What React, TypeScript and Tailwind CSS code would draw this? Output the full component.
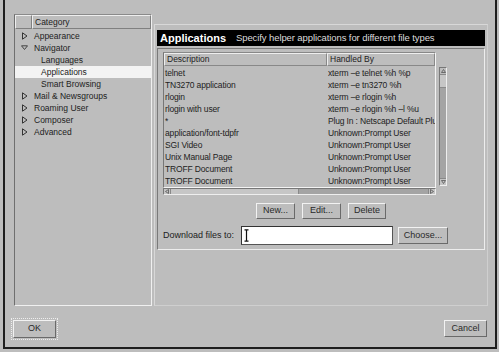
import React from "react";

const tree: { label: string; level: number; arrow?: "right" | "down"; selected?: boolean }[] = [
  { label: "Appearance", level: 0, arrow: "right" },
  { label: "Navigator", level: 0, arrow: "down" },
  { label: "Languages", level: 1 },
  { label: "Applications", level: 1, selected: true },
  { label: "Smart Browsing", level: 1 },
  { label: "Mail & Newsgroups", level: 0, arrow: "right" },
  { label: "Roaming User", level: 0, arrow: "right" },
  { label: "Composer", level: 0, arrow: "right" },
  { label: "Advanced", level: 0, arrow: "right" },
];

const apps: [string, string][] = [
  ["telnet", "xterm –e telnet %h %p"],
  ["TN3270 application", "xterm –e tn3270 %h"],
  ["rlogin", "xterm –e rlogin %h"],
  ["rlogin with user", "xterm –e rlogin %h –l %u"],
  ["*", "Plug In : Netscape Default Plu"],
  ["application/font-tdpfr", "Unknown:Prompt User"],
  ["SGI Video", "Unknown:Prompt User"],
  ["Unix Manual Page", "Unknown:Prompt User"],
  ["TROFF Document", "Unknown:Prompt User"],
  ["TROFF Document", "Unknown:Prompt User"],
];

function Arrow({ dir }: { dir: "right" | "down" }) {
  return dir === "right" ? (
    <svg width="6" height="8" viewBox="0 0 6 8" className="block">
      <path d="M0.5 0.8 L5 4 L0.5 7.2 Z" fill="none" stroke="#333" strokeWidth="1" />
    </svg>
  ) : (
    <svg width="7" height="6" viewBox="0 0 7 6" className="block">
      <path d="M0.5 0.8 L6.5 0.8 L3.5 4.5 Z" fill="none" stroke="#444" strokeWidth="1" />
    </svg>
  );
}

function Btn({ label, w, h = "h-[16px]" }: { label: string; w: string; h?: string }) {
  return (
    <div
      className={`${w} ${h} flex items-center justify-center border border-t-[#f2f2f2] border-l-[#f2f2f2] border-b-[#6a6a6a] border-r-[#6a6a6a] text-[9px] text-[#2a2a2a]`}
    >
      {label}
    </div>
  );
}

export default function App() {
  return (
    <div className="w-[499px] h-[352px] bg-[#bdbdbd] font-['Liberation_Sans',Arial,sans-serif] text-[#222] overflow-hidden">
      <div className="ml-[3px] w-[494px] h-[349px] border-l-2 border-r-2 border-b-2 border-[#1e1e1e] flex flex-col">
        {/* main row */}
        <div className="flex pl-[9px] pt-[14px]">
          {/* left tree panel */}
          <div className="w-[138px] h-[292px] border border-t-[#8a8a8a] border-l-[#6f6f6f] border-b-[#f0f0f0] border-r-[#f0f0f0] flex flex-col">
            <div className="flex h-[14px] shrink-0">
              <div className="w-[17px] h-full border border-t-[#eeeeee] border-l-[#eeeeee] border-b-[#808080] border-r-[#808080]" />
              <div className="flex-1 h-full border border-t-[#eeeeee] border-l-[#eeeeee] border-b-[#808080] border-r-[#808080] flex items-center pl-[2px] text-[8.5px]">
                Category
              </div>
            </div>
            <div className="flex flex-col pt-[1px]">
              {tree.map((t, i) => (
                <div
                  key={i}
                  className={`h-[12px] flex items-center text-[8.5px] ${t.selected ? "bg-[#f3f3f3]" : ""}`}
                >
                  <div className="w-[19px] flex justify-center">
                    {t.arrow ? <Arrow dir={t.arrow} /> : null}
                  </div>
                  <span className={t.level ? "pl-[7px]" : "pl-0"}>{t.label}</span>
                </div>
              ))}
            </div>
          </div>

          {/* right panel */}
          <div className="ml-[2px] mt-[10px] w-[334px] h-[282px] border border-t-[#d8d8d8] border-l-[#d8d8d8] border-b-[#cfcfcf] border-r-[#cfcfcf] flex flex-col px-[2px] pt-[5px]">
            <div className="h-[16px] bg-black flex items-center pl-[3px] whitespace-nowrap overflow-hidden">
              <span className="text-[11px] font-bold text-white">Applications</span>
              <span className="ml-[10px] text-[9.5px] tracking-[-0.1px] text-[#dcdcdc]">
                Specify helper applications for different file types
              </span>
            </div>
            <div className="mt-[2px] h-[202px] border border-t-[#7a7a7a] border-l-[#7a7a7a] border-b-[#ededed] border-r-[#ededed] flex flex-col pl-[5px] pt-[3px]">
              {/* table + scrollbars */}
              <div className="flex">
                <div className="w-[273px] h-[136px] border border-t-[#888] border-l-[#777] border-b-[#f4f4f4] border-r-[#f4f4f4] flex flex-col overflow-hidden">
                  <div className="flex h-[13px] shrink-0 text-[8.5px]">
                    <div className="w-[163px] border border-t-[#eee] border-l-[#eee] border-b-[#888] border-r-[#888] flex items-center pl-[2px]">
                      Description
                    </div>
                    <div className="flex-1 border border-t-[#eee] border-l-[#eee] border-b-[#888] border-r-[#888] flex items-center pl-[2px]">
                      Handled By
                    </div>
                  </div>
                  <div className="flex flex-col pt-[1px]">
                    {apps.map(([d, h], i) => (
                      <div key={i} className="flex h-[12px] shrink-0 items-center text-[8.5px] tracking-[-0.15px] whitespace-nowrap">
                        <div className="w-[163px] pl-[1px] overflow-hidden">{d}</div>
                        <div className="w-[108px] pl-[1px] overflow-hidden">{h}</div>
                      </div>
                    ))}
                  </div>
                </div>
                {/* vertical scrollbar */}
                <div className="ml-[3px] mt-[15px] w-[8px] h-[119px] border border-t-[#777] border-l-[#777] border-b-[#eee] border-r-[#eee] flex flex-col">
                  <div className="h-[7px] shrink-0 flex items-center justify-center border-b border-[#888]">
                    <svg width="5" height="4" viewBox="0 0 5 4">
                      <path d="M0.5 3.5 L2.5 0.5 L4.5 3.5 Z" fill="none" stroke="#555" strokeWidth="0.8" />
                    </svg>
                  </div>
                  <div className="h-[13px] shrink-0 bg-[#c6c6c6] border-b border-[#8a8a8a]" />
                  <div className="flex-1 bg-[#a4a4a4]" />
                  <div className="h-[7px] shrink-0 flex items-center justify-center bg-[#c4c4c4] border-t border-[#888]">
                    <svg width="5" height="4" viewBox="0 0 5 4">
                      <path d="M0.5 0.5 L2.5 3.5 L4.5 0.5 Z" fill="none" stroke="#555" strokeWidth="0.8" />
                    </svg>
                  </div>
                </div>
              </div>
              {/* horizontal scrollbar */}
              <div className="w-[273px] h-[7px] border border-t-[#777] border-l-[#777] border-b-[#eee] border-r-[#eee] flex">
                <div className="w-[7px] shrink-0 flex items-center justify-center border-r border-[#888] bg-[#c4c4c4]">
                  <svg width="4" height="5" viewBox="0 0 4 5">
                    <path d="M3.5 0.5 L0.5 2.5 L3.5 4.5 Z" fill="none" stroke="#555" strokeWidth="0.8" />
                  </svg>
                </div>
                <div className="w-[128px] shrink-0 bg-[#c6c6c6] border-r border-[#8a8a8a]" />
                <div className="flex-1 bg-[#a4a4a4]" />
                <div className="w-[7px] shrink-0 flex items-center justify-center bg-[#c4c4c4] border-l border-[#888]">
                  <svg width="4" height="5" viewBox="0 0 4 5">
                    <path d="M0.5 0.5 L3.5 2.5 L0.5 4.5 Z" fill="none" stroke="#555" strokeWidth="0.8" />
                  </svg>
                </div>
              </div>
              {/* buttons */}
              <div className="mt-[8px] flex justify-center gap-[7px] pr-[5px]">
                <Btn label="New..." w="w-[39px]" />
                <Btn label="Edit..." w="w-[39px]" />
                <Btn label="Delete" w="w-[38px]" />
              </div>
              {/* download row */}
              <div className="mt-[7px] flex items-center">
                <span className="text-[9px] w-[78px] whitespace-nowrap">Download files to:</span>
                <div className="w-[152px] h-[19px] bg-white border border-t-[#333] border-l-[#333] border-b-[#555] border-r-[#555] flex items-center pl-[2px]">
                  <svg width="5" height="13" viewBox="0 0 5 13">
                    <path d="M0.5 0.8 H4.5 M2.5 0.8 V12.2 M0.5 12.2 H4.5" fill="none" stroke="#111" strokeWidth="1.2" />
                  </svg>
                </div>
                <div className="ml-[5px]">
                  <Btn label="Choose..." w="w-[50px]" h="h-[17px]" />
                </div>
              </div>
            </div>
          </div>
        </div>

        {/* bottom row */}
        <div className="mt-[12px] flex items-start justify-between pl-[6px] pr-[8px]">
          <div className="border border-dotted border-[#eeeeee] p-[1px]">
            <Btn label="OK" w="w-[43px]" h="h-[18px]" />
          </div>
          <div className="mt-[2px]">
            <Btn label="Cancel" w="w-[43px]" h="h-[17px]" />
          </div>
        </div>
      </div>
    </div>
  );
}
